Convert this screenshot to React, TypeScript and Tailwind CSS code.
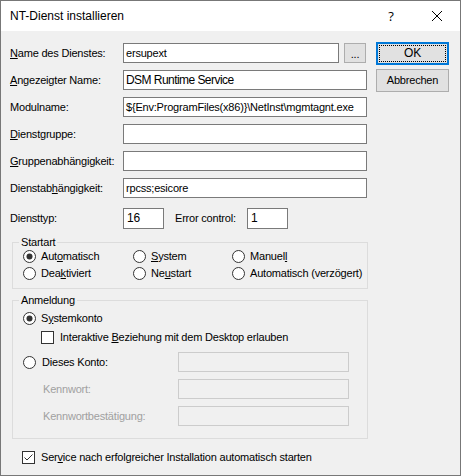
import type { ReactNode } from "react";

function Radio({ checked }: { checked?: boolean }) {
  return (
    <svg width="13" height="13" viewBox="0 0 13 13" className="shrink-0">
      <circle cx="6.5" cy="6.5" r="6" fill="#fff" stroke="#333" strokeWidth="1" />
      {checked && <circle cx="6.5" cy="6.5" r="3" fill="#333" />}
    </svg>
  );
}

function Check({ checked }: { checked?: boolean }) {
  return (
    <svg width="13" height="13" viewBox="0 0 13 13" className="shrink-0">
      <rect x="0.5" y="0.5" width="12" height="12" fill="#fff" stroke="#333" strokeWidth="1" />
      {checked && <path d="M2.5 6.5L5 9L10.5 3.5" fill="none" stroke="#333" strokeWidth="1" />}
    </svg>
  );
}

function Field({ children, w, big }: { children?: ReactNode; w: string; big?: boolean }) {
  return (
    <div
      className={`flex h-[20px] shrink-0 items-center overflow-hidden whitespace-nowrap border border-[#7a7a7a] bg-white pl-[2px] ${w} ${
        big ? "text-[12px] tracking-[-0.55px]" : ""
      }`}
    >
      {children}
    </div>
  );
}

function Row({ label, children, first }: { label: ReactNode; children: ReactNode; first?: boolean }) {
  return (
    <div className={`flex h-[20px] items-center ${first ? "" : "mt-[7px]"}`}>
      <div className="w-[113px] shrink-0">{label}</div>
      {children}
    </div>
  );
}

function Opt({ checked, children }: { checked?: boolean; children: ReactNode }) {
  return (
    <div className="flex h-[17px] items-center gap-[5px] whitespace-nowrap">
      <Radio checked={checked} />
      <span>{children}</span>
    </div>
  );
}

export default function App() {
  return (
    <div className="flex h-[476px] w-[461px] flex-col border border-[#777] bg-[#f0f0f0] font-['Liberation_Sans',Arial,sans-serif] text-[11px] leading-[13px] tracking-[-0.2px] text-black">
      {/* title bar */}
      <div className="flex h-[30px] shrink-0 items-center bg-white">
        <span className="flex-1 pl-[9px] text-[12px] tracking-[0px]">NT-Dienst installieren</span>
        <div className="flex h-full w-[46px] items-center justify-center font-['Open_Sans',sans-serif] text-[13px]">?</div>
        <div className="flex h-full w-[46px] items-center justify-center">
          <svg width="10" height="10" viewBox="0 0 10 10">
            <path d="M0 0L10 10M10 0L0 10" stroke="#000" strokeWidth="1" />
          </svg>
        </div>
      </div>

      <div className="flex flex-1 pl-[9px] pt-[12px]">
        {/* left form */}
        <div className="flex w-[357px] shrink-0 flex-col">
          <Row
            first
            label={
              <>
                <u>N</u>ame des Dienstes:
              </>
            }
          >
            <Field w="w-[216px]">ersupext</Field>
            <div className="ml-[5px] flex h-[20px] w-[22px] items-center justify-center border border-[#adadad] bg-[#e1e1e1] pt-[3px]">
              ...
            </div>
          </Row>
          <Row
            label={
              <>
                <u>A</u>ngezeigter Name:
              </>
            }
          >
            <Field w="w-[244px]" big>
              DSM Runtime Service
            </Field>
          </Row>
          <Row label="Modulname:">
            <Field w="w-[244px]">{"${Env:ProgramFiles(x86)}\\NetInst\\mgmtagnt.exe"}</Field>
          </Row>
          <Row
            label={
              <>
                <u>D</u>ienstgruppe:
              </>
            }
          >
            <Field w="w-[244px]" />
          </Row>
          <Row
            label={
              <>
                <u>G</u>ruppenabhängigkeit:
              </>
            }
          >
            <Field w="w-[244px]" />
          </Row>
          <Row
            label={
              <>
                Dienstab<u>h</u>ängigkeit:
              </>
            }
          >
            <Field w="w-[244px]">rpcss;esicore</Field>
          </Row>

          <div className="mt-[10px] flex h-[21px] items-center">
            <div className="w-[113px] shrink-0">Diensttyp:</div>
            <div className="flex h-[21px] w-[41px] items-center border border-[#7a7a7a] bg-white pl-[3px] text-[12px]">16</div>
            <div className="ml-[11px] w-[72px]">Error control:</div>
            <div className="flex h-[21px] w-[41px] items-center border border-[#7a7a7a] bg-white pl-[3px] text-[12px]">1</div>
          </div>

          {/* Startart */}
          <fieldset className="ml-[2px] mt-[7px] w-[356px] border border-[#dcdcdc]">
            <legend className="ml-[6px] px-[2px] leading-[12px]">Startart</legend>
            <div className="grid grid-cols-[110px_99px_1fr] pb-[6px] pl-[10px]">
              <Opt checked>
                Aut<u>o</u>matisch
              </Opt>
              <Opt>
                <u>S</u>ystem
              </Opt>
              <Opt>
                Manuel<u>l</u>
              </Opt>
              <Opt>
                Dea<u>k</u>tiviert
              </Opt>
              <Opt>
                Ne<u>u</u>start
              </Opt>
              <Opt>Automatisch (verzögert)</Opt>
            </div>
          </fieldset>

          {/* Anmeldung */}
          <fieldset className="ml-[2px] mt-[5px] w-[356px] border border-[#dcdcdc]">
            <legend className="ml-[6px] px-[2px] leading-[12px]">Anmeldung</legend>
            <div className="flex flex-col pb-[12px] pl-[10px] pt-[4px]">
              <Opt checked>
                S<u>y</u>stemkonto
              </Opt>
              <div className="mt-[2px] flex h-[17px] items-center gap-[6px] pl-[18px]">
                <Check />
                <span>
                  Interaktive <u>B</u>eziehung mit dem Desktop erlauben
                </span>
              </div>
              <div className="mt-[6px] flex h-[20px] items-center">
                <div className="flex w-[155px] items-center gap-[6px]">
                  <Radio />
                  <span>Dieses Konto:</span>
                </div>
                <div className="h-[20px] w-[171px] border border-[#cccccc] bg-[#f0f0f0]" />
              </div>
              <div className="mt-[7px] flex h-[20px] items-center">
                <div className="w-[155px] pl-[20px] text-[#a0a0a0]">Kennwort:</div>
                <div className="h-[20px] w-[171px] border border-[#cccccc] bg-[#f0f0f0]" />
              </div>
              <div className="mt-[7px] flex h-[20px] items-center">
                <div className="w-[155px] pl-[20px] text-[#a0a0a0]">Kennwortbestätigung:</div>
                <div className="h-[20px] w-[171px] border border-[#cccccc] bg-[#f0f0f0]" />
              </div>
            </div>
          </fieldset>

          <div className="ml-[12px] mt-[10px] flex h-[17px] items-center gap-[6px] whitespace-nowrap">
            <Check checked />
            <span>
              Ser<u>v</u>ice nach erfolgreicher Installation automatisch starten
            </span>
          </div>
        </div>

        {/* buttons */}
        <div className="-mt-[1px] ml-[9px] flex w-[73px] shrink-0 flex-col gap-[4px]">
          <div className="h-[23px] border-2 border-[#0078d7] bg-[#e1e1e1] p-[1px]">
            <div className="flex h-full items-center justify-center border border-dotted border-black text-[12px]">OK</div>
          </div>
          <div className="flex h-[23px] items-center justify-center border border-[#adadad] bg-[#e1e1e1] text-[11px]">Abbrechen</div>
        </div>
      </div>
    </div>
  );
}
